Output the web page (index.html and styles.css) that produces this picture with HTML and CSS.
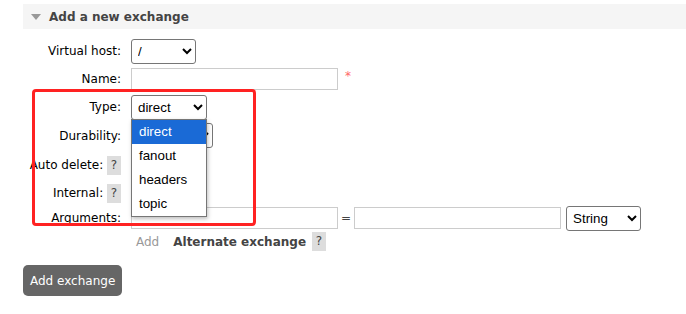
FILE: index.html
```html
<!DOCTYPE html>
<html lang="en">
  <head>
    <meta charset="UTF-8" />
    <meta name="viewport" content="width=device-width, initial-scale=1.0" />
    <link rel="stylesheet" href="styles.css">
  </head>
  <body>
    <div class="section">
      <div class="section-head">
        <span class="arrow"></span>
        <h2>Add a new exchange</h2>
      </div>

      <form class="exchange-form">
        <div class="row r1">
          <label>Virtual host:</label>
          <select class="sel-vhost"><option>/</option></select>
        </div>
        <div class="row r2">
          <label>Name:</label>
          <input type="text" class="txt-name" />
          <span class="req">*</span>
        </div>
        <div class="row r3">
          <label>Type:</label>
          <div class="type-wrap">
            <select class="sel-type"><option>direct</option></select>
            <!-- open dropdown list -->
            <ul class="dropdown">
              <li class="active">direct</li>
              <li>fanout</li>
              <li>headers</li>
              <li>topic</li>
            </ul>
          </div>
        </div>
        <div class="row r4">
          <label>Durability:</label>
          <select class="sel-durable"><option>Durable</option></select>
        </div>
        <div class="row r5">
          <label>Auto delete: <span class="help">?</span></label>
        </div>
        <div class="row r6">
          <label>Internal: <span class="help">?</span></label>
        </div>
        <div class="row r7">
          <label>Arguments:</label>
          <input type="text" class="txt-arg" />
          <span class="eq">=</span>
          <input type="text" class="txt-arg" />
          <select class="sel-string"><option>String</option></select>
        </div>
        <div class="row r8">
          <label></label>
          <span class="add-link">Add</span>
          <span class="alt">Alternate exchange</span>
          <span class="help">?</span>
        </div>

        <button type="button" class="btn-add">Add exchange</button>
      </form>

      <div class="highlight"></div>
    </div>
  </body>
</html>
```

FILE: styles.css
```css
body {
  margin: 0;
  padding: 0;
  background-color: #fff;
  font-family: "DejaVu Sans", Verdana, sans-serif;
  font-size: 12px;
  color: #000;
}

.section {
  position: relative;
  padding: 4px 0 0 23px;
}

.section-head {
  display: flex;
  align-items: center;
  height: 25px;
  background-color: #f5f5f5;
}

.arrow {
  width: 0;
  height: 0;
  margin: 1px 8px 0 8px;
  border-left: 5px solid transparent;
  border-right: 5px solid transparent;
  border-top: 6px solid #999;
}

.section-head h2 {
  margin: 0;
  font-size: 12px;
  font-weight: bold;
  color: #444;
}

.exchange-form {
  padding-top: 7px;
}

.row {
  display: flex;
  align-items: center;
}

.row label {
  width: 98px;
  margin-right: 10px;
  text-align: right;
  white-space: nowrap;
  flex-shrink: 0;
}

.r1 { height: 28px; margin-top: 1px; }
.r2 { height: 28px; }
.r3 { height: 28px; }
.r4 { height: 29px; }
.r5 { height: 31px; }
.r6 { height: 25px; }
.r7 { height: 24px; }
.r8 { height: 23px; }

select {
  font-family: "Liberation Sans", Arial, sans-serif;
  font-size: 13.33px;
  height: 25px;
  border: 1px solid #767676;
  border-radius: 3px;
  background: #fff;
  color: #000;
  padding: 0 2px;
  margin: 0;
}

.sel-vhost { width: 65px; }
.sel-type { width: 76px; }
.sel-durable { width: 82px; }
.sel-string { width: 75px; margin-left: 5px; }

input[type="text"] {
  height: 22px;
  box-sizing: border-box;
  border: 1px solid #ccc;
  margin: 0;
  padding: 2px;
}

.txt-name { width: 207px; }
.txt-arg { width: 207px; }

.req {
  color: #f66;
  margin-left: 7px;
  margin-top: -6px;
}

.eq {
  margin: 0 3px 0 3px;
  color: #444;
}

.help {
  display: inline-block;
  width: 14px;
  height: 19px;
  line-height: 19px;
  text-align: center;
  background-color: #ddd;
  color: #444;
  vertical-align: middle;
}

.type-wrap {
  position: relative;
}

.dropdown {
  position: absolute;
  left: 0;
  top: 24px;
  width: 76px;
  margin: 0;
  padding: 0;
  list-style: none;
  box-sizing: border-box;
  background: #fff;
  border: 1px solid #767676;
  box-shadow: 1px 2px 4px rgba(0, 0, 0, 0.25);
  font-family: "Liberation Sans", Arial, sans-serif;
  font-size: 13.33px;
  z-index: 2;
}

.dropdown li {
  height: 24px;
  line-height: 24px;
  padding-left: 7px;
}

.dropdown li.active {
  background-color: #1a6ad6;
  color: #fff;
}

.add-link {
  color: #999;
  margin-left: 5px;
  margin-right: 14px;
}

.alt {
  font-weight: bold;
  color: #444;
  margin-right: 6px;
}

.btn-add {
  margin-top: 12px;
  height: 31px;
  padding: 0 7px;
  border: none;
  border-radius: 5px;
  background-color: #666;
  color: #fff;
  font-family: "DejaVu Sans", Verdana, sans-serif;
  font-size: 12px;
}

.highlight {
  position: absolute;
  left: 32px;
  top: 89px;
  width: 218px;
  height: 131px;
  border: 3px solid #f22;
  border-radius: 4px;
  z-index: 3;
}
```
